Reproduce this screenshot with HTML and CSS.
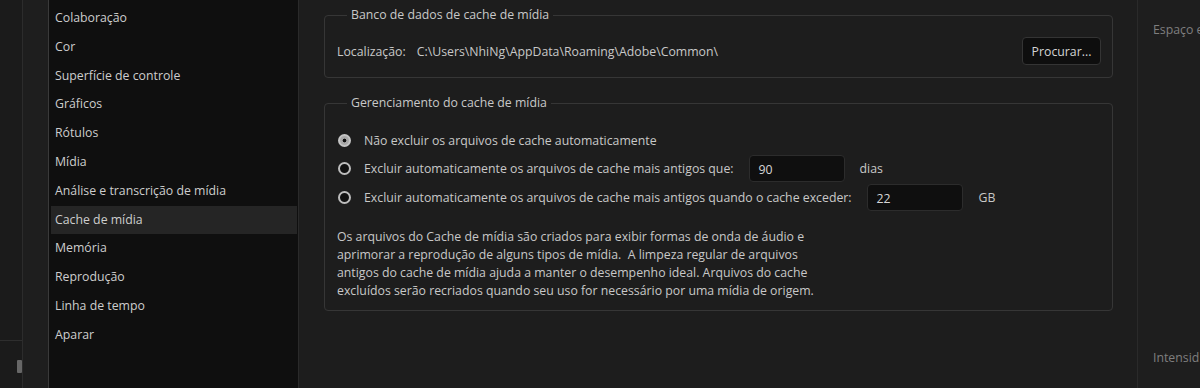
FILE: index.html
```html
<!DOCTYPE html>
<html lang="pt-BR">
<head>
<meta charset="utf-8">
<title>Preferências - Cache de mídia</title>
<link rel="stylesheet" href="styles.css">
</head>
<body>
<div class="app">
  <div class="strip1">
    <div class="strip1-top"></div>
    <div class="strip1-bottom"><div class="thumb"></div></div>
  </div>
  <div class="strip2"></div>
  <ul class="cats">
    <li>Colaboração</li>
    <li>Cor</li>
    <li>Superfície de controle</li>
    <li>Gráficos</li>
    <li>Rótulos</li>
    <li>Mídia</li>
    <li>Análise e transcrição de mídia</li>
    <li class="sel">Cache de mídia</li>
    <li>Memória</li>
    <li>Reprodução</li>
    <li>Linha de tempo</li>
    <li>Aparar</li>
  </ul>
  <main class="main">
    <fieldset class="group g1">
      <legend>Banco de dados de cache de mídia</legend>
      <div class="locrow">
        <span class="loclabel">Localização:</span>
        <span class="locpath">C:\Users\NhiNg\AppData\Roaming\Adobe\Common\</span>
        <button class="btn">Procurar...</button>
      </div>
    </fieldset>
    <fieldset class="group g2">
      <legend>Gerenciamento do cache de mídia</legend>
      <div class="opt"><span class="radio on"></span><span>Não excluir os arquivos de cache automaticamente</span></div>
      <div class="opt"><span class="radio"></span><span>Excluir automaticamente os arquivos de cache mais antigos que:</span><span class="field f1">90</span><span class="unit">dias</span></div>
      <div class="opt"><span class="radio"></span><span>Excluir automaticamente os arquivos de cache mais antigos quando o cache exceder:</span><span class="field f2">22</span><span class="unit u2">GB</span></div>
      <p class="desc">Os arquivos do Cache de mídia são criados para exibir formas de onda de áudio e<br>aprimorar a reprodução de alguns tipos de mídia.&nbsp; A limpeza regular de arquivos<br>antigos do cache de mídia ajuda a manter o desempenho ideal. Arquivos do cache<br>excluídos serão recriados quando seu uso for necessário por uma mídia de origem.</p>
    </fieldset>
  </main>
  <aside class="side">
    <div class="side-top">Espaço e</div>
    <div class="side-bottom">Intensid</div>
  </aside>
</div>
</body>
</html>
```
FILE: styles.css
```css
* { box-sizing: border-box; }
html, body { margin: 0; padding: 0; background: #1d1d1d; }
body {
  font-family: "Open Sans", "Noto Sans", sans-serif;
  font-size: 12.3px;
  color: #c8c8c8;
  width: 1200px;
  height: 388px;
  overflow: hidden;
}
.app { display: flex; height: 388px; }

.strip1 {
  width: 23px;
  background: #1b1b1b;
  border-right: 1px solid #2c2c2c;
  display: flex;
  flex-direction: column;
}
.strip1-top { height: 341px; border-bottom: 1px solid #2e2e2e; }
.strip1-bottom { flex: 1; display: flex; justify-content: flex-end; padding-top: 19px; }
.thumb { width: 5px; height: 13px; background: #676767; border-radius: 1px; }

.strip2 {
  width: 26px;
  background: #1e1e1e;
  border-right: 1px solid #3a3a3a;
}

.cats {
  list-style: none;
  margin: 0;
  padding: 4px 1px 0 2px;
  width: 250px;
  background: #0f0f0f;
  border-right: 1px solid #2a2a2a;
}
.cats li {
  height: 28.8px;
  line-height: 28.8px;
  padding-left: 4px;
  color: #cdcdcd;
  white-space: nowrap;
}
.cats li.sel { background: #252525; }

.main {
  width: 839px;
  padding: 6px 24px 0 25px;
  border-right: 1px solid #2a2a2a;
  background: #1d1d1d;
}
.group {
  margin: 0;
  border: 1px solid #363636;
  border-radius: 4px;
  min-width: 0;
}
.group legend {
  padding: 0 4px;
  margin-left: 10px;
  line-height: 18px;
  color: #c8c8c8;
}
.g1 { padding: 13px 11px 11px 12px; height: 72px; }
.g2 { padding: 14px 11px 8px 12px; margin-top: 16px; height: 217px; }

.locrow { display: flex; align-items: center; height: 28px; }
.loclabel { margin-right: 11px; }
.locpath { flex: 1; }
.btn {
  font: inherit;
  color: #d4d4d4;
  background: #0e0e0e;
  border: 1px solid #343434;
  border-radius: 4px;
  height: 28px;
  width: 79px;
  padding: 0;
}

.opt { display: flex; align-items: center; height: 28.5px; white-space: nowrap; }
.radio {
  width: 13px;
  height: 13px;
  border-radius: 50%;
  border: 2px solid #bdbdbd;
  background: #111;
  margin: 0 13px 0 1px;
  flex: none;
}
.radio.on {
  background: radial-gradient(circle, #111 0 1.6px, #a8a8a8 2.2px);
  border-color: #c4c4c4;
}
.field {
  margin-left: 15px;
  width: 96px;
  height: 27px;
  line-height: 27px;
  background: #0f0f0f;
  border: 1px solid #2c2c2c;
  border-radius: 4px;
  padding-left: 9px;
  color: #d6d6d6;
}
.unit { margin-left: 15px; }
.u2 { margin-left: 16px; }

.desc {
  margin: 16px 0 0 0;
  line-height: 18px;
  color: #c8c8c8;
}

.side {
  flex: 1;
  background: #1e1e1e;
  padding-left: 15px;
  position: relative;
  color: #7e7e7e;
  white-space: nowrap;
  overflow: hidden;
}
.side-top { margin-top: 20px; line-height: 20px; }
.side-bottom { position: absolute; top: 348px; left: 15px; line-height: 20px; }
```
